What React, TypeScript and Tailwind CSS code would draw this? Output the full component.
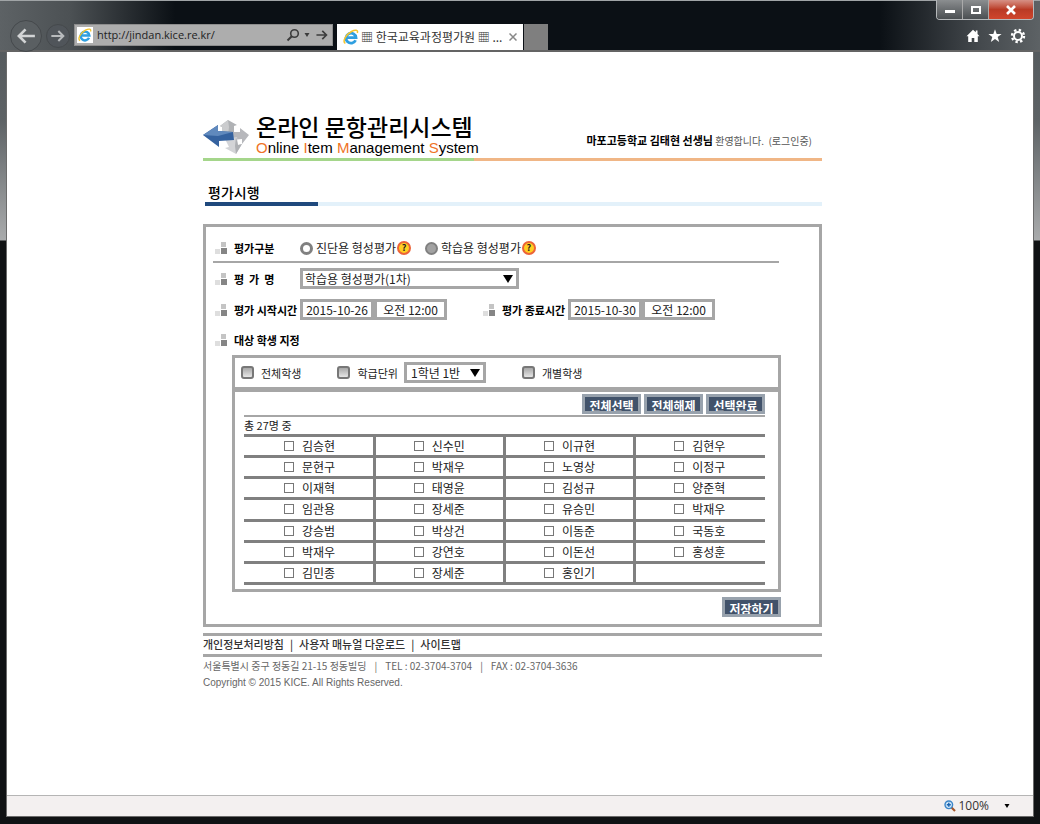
import type { ReactNode } from "react";

const students = [
  ["김승현", "신수민", "이규현", "김현우"],
  ["문현구", "박재우", "노영상", "이정구"],
  ["이재혁", "태영윤", "김성규", "양준혁"],
  ["임관용", "장세준", "유승민", "박재우"],
  ["강승범", "박상건", "이동준", "국동호"],
  ["박재우", "강연호", "이돈선", "홍성훈"],
  ["김민종", "장세준", "홍인기", ""],
];

function BrowserLogo({ className }: { className: string }) {
  return (
    <svg viewBox="0 0 16 16" className={className} fill="none" aria-hidden>
      <path d="M12.6 11.2A5 5 0 1 1 13 8.6H4.2" stroke="#2f9fe0" strokeWidth="2.8" />
      <path d="M2.4 14.4C-1 12.5 3 5.500 8.500 2.500 12 .6 15.500 .5 14.300 4" stroke="#f2c42f" strokeWidth="1.500" />
    </svg>
  );
}

function Chevron({ className }: { className: string }) {
  return (
    <svg viewBox="0 0 10 8" className={className} fill="currentColor" aria-hidden>
      <path d="M0 0h10L5 8z" />
    </svg>
  );
}

function Arrow({ className, flip }: { className: string; flip?: boolean }) {
  return (
    <svg viewBox="0 0 20 18" className={className} fill="none" stroke="currentColor" strokeWidth="3" aria-hidden>
      <path d={flip ? "M20 9H2M9.500 1.500L2 9l7.500 7.500" : "M0 9h18M10.500 1.500L18 9l-7.500 7.500"} />
    </svg>
  );
}

function BrowserBar() {
  return (
    <header className="relative flex h-13 shrink-0 items-end border-t border-[#a0a4a6] border-b-2 border-b-[#646464] bg-[linear-gradient(to_right,#5d6265_0,#4c5154_70px,#0b1015_175px,#0b1015_calc(100%-160px),#44494d_calc(100%-60px),#5d6265_100%)] pl-2.5 text-[#e4e4e4]">
      <button type="button" aria-label="뒤로" className="-mb-0.5 mr-1 flex size-8 items-center justify-center rounded-full border border-[#45494c] bg-[#5a5f62] text-[#d2d4d5]">
        <Arrow flip className="h-4 w-4.5" />
      </button>
      <button type="button" aria-label="앞으로" className="mb-0.5 flex size-6 items-center justify-center rounded-full border border-[#45494c] bg-[#50555a] text-[#b8bbbd]">
        <Arrow className="h-3 w-3.5" />
      </button>
      <div className="mb-1 ml-1 flex h-5.5 w-[259px] items-center border border-[#8d8d8d] bg-[#adadad] px-0.5 text-[#3c3c3c]">
        <span className="flex size-4 items-center justify-center bg-white">
          <BrowserLogo className="size-3.5" />
        </span>
        <input
          aria-label="주소"
          defaultValue="http://jindan.kice.re.kr/"
          className="ml-1 min-w-0 flex-1 bg-transparent font-['Open_Sans','Noto_Sans_CJK_KR',sans-serif] text-[11px] leading-4 text-[#222]"
        />
        <svg viewBox="0 0 14 14" className="size-3.5" fill="none" stroke="currentColor" strokeWidth="1.600" aria-hidden>
          <circle cx="8.500" cy="5.500" r="3.800" />
          <path d="M5.800 8.300L1.500 12.500" strokeWidth="2" />
        </svg>
        <Chevron className="ml-1 h-1 w-1.5" />
        <Arrow className="ml-1.5 mr-0.5 h-2.5 w-3" />
      </div>
      <div className="ml-1 flex h-6.5 w-[186px] items-center bg-white px-1.5 text-[#333]">
        <BrowserLogo className="size-4" />
        <span className="ml-0.5 flex-1 truncate whitespace-nowrap text-[12px] leading-5">▦ 한국교육과정평가원 ▦ ...</span>
        <button type="button" aria-label="탭 닫기" className="text-[#888]">
          <svg viewBox="0 0 8 8" className="size-2" stroke="currentColor" strokeWidth="1.500" aria-hidden>
            <path d="M.5.5l7 7M7.500.5l-7 7" />
          </svg>
        </button>
      </div>
      <button type="button" aria-label="새 탭" className="ml-px h-6.5 w-6 bg-[#7f7f7f]" />
      <div className="mb-1.5 ml-auto mr-3.5 flex items-center gap-2 text-white">
        <button type="button" aria-label="홈">
          <svg viewBox="0 0 14 14" className="size-3.5" fill="currentColor" aria-hidden>
            <path d="M7 .8L.5 7.200h1.700V13h3.500V9h2.600v4h3.500V7.200h1.700L11.500 5V1.500H9.800v1.800z" />
          </svg>
        </button>
        <button type="button" aria-label="즐겨찾기">
          <svg viewBox="0 0 14 14" className="size-3.5" fill="currentColor" aria-hidden>
            <path d="M7 .3l1.700 4.600h4.900L9.700 7.900l1.500 5L7 10l-4.200 2.900 1.500-5L.4 4.900h4.900z" />
          </svg>
        </button>
        <button type="button" aria-label="도구">
          <svg viewBox="0 0 16 16" className="size-4" fill="none" stroke="currentColor" aria-hidden>
            <circle cx="8" cy="8" r="4" strokeWidth="2" />
            <circle cx="8" cy="8" r="6" strokeWidth="2.400" strokeDasharray="2.356 2.356" />
          </svg>
        </button>
      </div>
      <div className="absolute -top-px right-1.5 flex h-5 overflow-hidden rounded-b border border-t-0 border-[#b5b8ba]">
        <button type="button" aria-label="최소화" className="flex w-6.5 items-center justify-center border-r border-[#aaa] bg-linear-to-b from-[#8b8e90] to-[#4b4f52]">
          <span className="mt-1 h-[3px] w-2.5 bg-white" />
        </button>
        <button type="button" aria-label="최대화" className="flex w-6.5 items-center justify-center border-r border-[#aaa] bg-linear-to-b from-[#8b8e90] to-[#4b4f52]">
          <span className="h-2 w-2.5 border-2 border-white" />
        </button>
        <button type="button" aria-label="닫기" className="flex w-11 items-center justify-center bg-linear-to-b from-[#d69085] via-[#b93a25] to-[#d0452c]">
          <svg viewBox="0 0 10 10" className="size-2.5" stroke="#fff" strokeWidth="2.600" aria-hidden>
            <path d="M1 1l8 8M9 1L1 9" />
          </svg>
        </button>
      </div>
    </header>
  );
}

function SiteLogo() {
  return (
    <svg viewBox="0 0 46 36" className="h-9 w-[46px]" aria-hidden>
      <path d="M17 7l8-6 9 5-3 1v7l-11 2-1-8z" fill="#b0b2b5" />
      <path d="M17 7l8-6 1 7-1 8-5 0-1-8z" fill="#cbccce" />
      <path d="M30 13h7v-4l9 7-7 9v-5l-10 1z" fill="#b7b8bc" />
      <path d="M22 20l12-2 1 8 4-1-6 10-11-6 4-1z" fill="#d3d4d7" />
      <path d="M33 18l2 8 4-1-6 10-1-8z" fill="#aeb0b4" />
      <path d="M0 16l15-10v6l15 1 1 8-15 1v6z" fill="#35629f" />
      <path d="M0 16l15-10v6l15 1-15 4z" fill="#6089bd" />
    </svg>
  );
}

function Bullet() {
  return (
    <svg viewBox="0 0 12 12" className="size-3 shrink-0" aria-hidden>
      <path d="M6 0h5v5H6z" fill="#c4c4c4" />
      <path d="M0 7h5v5H0z" fill="#dedede" />
      <path d="M6 6h6v6H6z" fill="#858585" />
    </svg>
  );
}

function HelpBadge() {
  return (
    <button type="button" aria-label="도움말" className="ml-px flex size-3.5 items-center justify-center rounded-full border-2 border-[#ec6338] bg-[#ffcf21] text-[9px] leading-3 font-bold text-[#222]">
      ?
    </button>
  );
}

function FieldLabel({ htmlFor, children }: { htmlFor?: string; children: ReactNode }) {
  return (
    <div className="flex w-[85px] shrink-0 items-center gap-[7px]">
      <Bullet />
      <label htmlFor={htmlFor} className="whitespace-nowrap text-[11px] font-bold text-black">
        {children}
      </label>
    </div>
  );
}

function DateTimeFields({ id, date, time }: { id: string; date: string; time: string }) {
  return (
    <div className="flex">
      <input id={id} defaultValue={date} className="h-[21px] w-[74px] border-[3px] border-[#a6a6a6] text-center" />
      <input aria-label="시간" defaultValue={time} className="h-[21px] w-[73px] border-[3px] border-[#a6a6a6] text-center" />
    </div>
  );
}

function ScopeCheck({ label }: { label: string }) {
  return (
    <label className="flex items-center gap-[7px] text-[11px]">
      <input type="checkbox" className="size-[13px] appearance-none rounded-[3px] border-2 border-[#777] bg-linear-to-b from-[#a8a8a8] to-[#e6e6e6]" />
      {label}
    </label>
  );
}

function DarkButton({ children }: { children: ReactNode }) {
  return (
    <button type="button" className="flex h-5 w-[59px] items-center justify-center overflow-hidden whitespace-nowrap border-[3px] border-[#98a2ad] bg-[#41526a] pt-1 text-[12px] leading-3 font-bold text-white">
      {children}
    </button>
  );
}

function StudentTable() {
  return (
    <table className="h-[151px] w-full table-fixed border-collapse">
      <tbody>
        {students.map((row, i) => (
          <tr key={i} className="border-y-[3px] border-[#808080]">
            {row.map((name, j) => (
              <td key={j} className="border-l-[3px] border-[#808080] p-0 pl-[38px] first:border-l-0 first:pl-10">
                {name && (
                  <label className="flex items-center gap-2 leading-4">
                    <input type="checkbox" className="size-2.5 appearance-none border border-[#777] bg-white checked:bg-[#777]" />
                    {name}
                  </label>
                )}
              </td>
            ))}
          </tr>
        ))}
      </tbody>
    </table>
  );
}

function EvaluationForm() {
  return (
    <form className="mt-[18px] border-[3px] border-[#a6a6a6] pb-[7px] text-[12px] leading-4">
      <div className="mr-10 ml-[7px] flex h-9 items-center border-b-2 border-[#a6a6a6] pt-2 pl-0.5">
        <FieldLabel>평가구분</FieldLabel>
        <label className="flex items-center gap-[3px] whitespace-nowrap">
          <input type="radio" name="kind" className="size-[13px] appearance-none rounded-full border-[3px] border-[#808080] bg-white" />
          진단용 형성평가
        </label>
        <HelpBadge />
        <label className="ml-3.5 flex items-center gap-[3px] whitespace-nowrap">
          <input type="radio" name="kind" defaultChecked className="size-[13px] appearance-none rounded-full border-2 border-[#808080] bg-[#a2a2a2]" />
          학습용 형성평가
        </label>
        <HelpBadge />
      </div>

      <div className="mt-[5px] flex h-[21px] items-center pl-[9px]">
        <FieldLabel htmlFor="exam">평&nbsp; 가&nbsp; 명</FieldLabel>
        <div className="relative">
          <select id="exam" className="block h-[21px] w-[219px] appearance-none border-[3px] border-[#a6a6a6] pl-0.5 leading-3.5">
            <option>학습용 형성평가(1차)</option>
          </select>
          <Chevron className="pointer-events-none absolute top-[7px] right-[6px] h-2 w-2.5 text-black" />
        </div>
      </div>

      <div className="mt-2.5 flex h-[21px] items-center pl-[9px]">
        <FieldLabel htmlFor="start">평가 시작시간</FieldLabel>
        <DateTimeFields id="start" date="2015-10-26" time="오전 12:00" />
        <div className="ml-9 flex items-center">
          <FieldLabel htmlFor="end">평가 종료시간</FieldLabel>
          <DateTimeFields id="end" date="2015-10-30" time="오전 12:00" />
        </div>
      </div>

      <div className="mt-2.5 flex h-5 items-center pl-[9px]">
        <FieldLabel>대상 학생 지정</FieldLabel>
      </div>

      <div className="mt-[5px] mr-[38px] ml-[26px] border-[3px] border-[#a6a6a6]">
        <div className="flex h-[34px] items-center border-b-[5px] border-[#a6a6a6] pl-1.5">
          <ScopeCheck label="전체학생" />
          <div className="ml-9 flex items-center gap-1.5">
            <ScopeCheck label="학급단위" />
            <div className="relative">
              <select aria-label="학급" className="block h-[21px] w-[82px] appearance-none border-[3px] border-[#a6a6a6] pl-1 leading-3.5">
                <option>1학년 1반</option>
              </select>
              <Chevron className="pointer-events-none absolute top-[7px] right-[6px] h-2 w-2.5 text-black" />
            </div>
          </div>
          <div className="ml-9">
            <ScopeCheck label="개별학생" />
          </div>
        </div>
        <div className="pt-0.5 pr-[13px] pb-1 pl-[9px]">
          <div className="mb-px flex justify-end gap-[3px]">
            <DarkButton>전체선택</DarkButton>
            <DarkButton>전체해제</DarkButton>
            <DarkButton>선택완료</DarkButton>
          </div>
          <p className="h-[19px] border-t-2 border-[#a6a6a6] text-[11px] leading-[17px]">총 27명 중</p>
          <StudentTable />
        </div>
      </div>

      <div className="mt-[5px] mr-[38px] flex justify-end">
        <DarkButton>저장하기</DarkButton>
      </div>
    </form>
  );
}

export default function App() {
  return (
    <div className="flex min-h-screen flex-col bg-[linear-gradient(to_bottom,#505558_0,#5d6265_120px,#a9abac_240px,#101214_241px)] font-['Noto_Sans_CJK_KR',sans-serif] text-[#222]">
      <BrowserBar />
      <div className="mx-[7px] mb-2 flex flex-1 flex-col bg-white outline outline-[#6b6b6b]">
        <main className="ml-49 w-full max-w-[619px] flex-1 pt-[60px]">
          <div className="flex h-[49px] border-b-[3px] border-[#f0b686] [border-image:linear-gradient(to_right,#a5d68b_271px,#f0b686_271px)_1]">
            <a href="#" className="flex items-start">
              <span className="mt-[7px] mr-[7px]">
                <SiteLogo />
              </span>
              <span className="whitespace-nowrap text-black">
                <span className="block text-[23px] leading-7 font-medium">온라인 문항관리시스템</span>
                <span className="block font-['Liberation_Sans',sans-serif] text-[15px] leading-4">
                  <span className="text-[#ef7326]">O</span>nline <span className="text-[#ef7326]">I</span>tem{" "}
                  <span className="text-[#ef7326]">M</span>anagement <span className="text-[#ef7326]">S</span>ystem
                </span>
              </span>
            </a>
            <p className="mt-5 mr-2.5 ml-auto whitespace-nowrap text-[10px] leading-4 text-[#555]">
              <b className="text-[11px] text-black">마포고등학교 김태현 선생님</b> 환영합니다. &nbsp;(로그인중)
            </p>
          </div>

          <h1 className="ml-0.5 mt-5 h-[25px] border-b-4 [border-image:linear-gradient(to_right,#1f497d_114px,#e3f1fa_114px)_1] pl-[3px] text-[14px] leading-[22px] font-medium text-black">
            평가시행
          </h1>

          <EvaluationForm />

          <footer className="mt-1.5 text-[10px] leading-[18px] whitespace-nowrap text-[#666]">
            <nav className="flex h-6 gap-1.5 border-y-[3px] border-[#a6a6a6] text-[11px] leading-4 font-medium text-[#333]">
              <a href="#">개인정보처리방침</a>
              <span>|</span>
              <a href="#">사용자 매뉴얼 다운로드</a>
              <span>|</span>
              <a href="#">사이트맵</a>
            </nav>
            <p className="flex gap-2">
              <span>서울특별시 중구 정동길 21-15 정동빌딩</span>
              <span>|</span>
              <span>TEL : 02-3704-3704</span>
              <span>|</span>
              <span>FAX : 02-3704-3636</span>
            </p>
            <p className="font-['Liberation_Sans',sans-serif] leading-4">Copyright © 2015 KICE. All Rights Reserved.</p>
          </footer>
        </main>

        <div className="flex h-[21px] items-center justify-end border-t border-[#b5b5b5] bg-[#f3f0f0] pr-[22px] text-[12px] leading-4">
          <svg viewBox="0 0 12 12" className="mr-0.5 size-3" fill="none" aria-hidden>
            <path d="M7 7l4 4" stroke="#a5562b" strokeWidth="2.200" />
            <circle cx="4.800" cy="4.800" r="3.800" fill="#cfe6f8" stroke="#3c86c8" strokeWidth="1.400" />
            <path d="M4.800 2.800v4M2.800 4.800h4" stroke="#1c64b0" strokeWidth="1.400" />
          </svg>
          <button type="button" className="flex items-center">
            <span className="font-['Open_Sans',sans-serif] text-[#333]">100%</span>
            <Chevron className="ml-3.5 h-1 w-2 text-black" />
          </button>
        </div>
      </div>
    </div>
  );
}
